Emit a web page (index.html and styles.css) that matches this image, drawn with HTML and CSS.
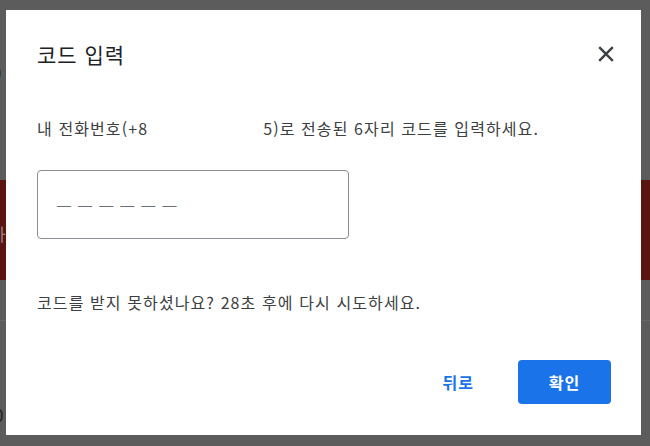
FILE: index.html
```html
<!DOCTYPE html>
<html lang="ko">
<head>
<meta charset="utf-8">
<title>코드 입력</title>
<link rel="stylesheet" href="styles.css">
</head>
<body>
<div class="backdrop">
  <div class="bg-top"><span class="bg-paren">)</span></div>
  <div class="bg-band"><span class="bg-ha">하</span></div>
  <div class="bg-rule"></div>
  <div class="bg-bottom"><span class="bg-zero">0</span></div>
</div>
<div class="dialog" role="dialog">
  <div class="header">
    <h1 class="title">코드 입력</h1>
    <button class="close" aria-label="닫기">
      <svg width="16" height="16" viewBox="0 0 16 16"><path d="M1.2 1.2 L14.8 14.8 M14.8 1.2 L1.2 14.8" stroke="#3c4043" stroke-width="2.4" fill="none"/></svg>
    </button>
  </div>
  <p class="desc">내 전화번호(+8<span class="mask"></span>5)로 전송된 6자리 코드를 입력하세요.</p>
  <div class="field"><span class="placeholder">— — — — — —</span></div>
  <p class="resend">코드를 받지 못하셨나요? 28초 후에 다시 시도하세요.</p>
  <div class="actions">
    <button class="btn-text">뒤로</button>
    <button class="btn-primary">확인</button>
  </div>
</div>
</body>
</html>
```
FILE: styles.css
```css
html, body {
  margin: 0;
  padding: 0;
}
body {
  width: 650px;
  height: 446px;
  overflow: hidden;
  background: #5c5c5c;
  font-family: "Noto Sans CJK KR", "Noto Sans", sans-serif;
  position: relative;
}
.backdrop {
  display: flex;
  flex-direction: column;
}
.bg-top {
  height: 180px;
  position: relative;
}
.bg-paren {
  position: absolute;
  left: -4px;
  top: 62px;
  font-size: 18px;
  color: #1e1e1e;
  line-height: 20px;
}
.bg-band {
  height: 100px;
  background: #5a1510;
  position: relative;
}
.bg-ha {
  position: absolute;
  left: -10px;
  top: 44px;
  font-size: 17px;
  line-height: 20px;
  color: #9a8583;
}
.bg-rule {
  height: 40px;
  border-bottom: 1px solid #686868;
}
.bg-bottom {
  height: 125px;
  position: relative;
}
.bg-zero {
  position: absolute;
  left: -6px;
  top: 84px;
  font-size: 17px;
  line-height: 20px;
  color: #1e1e1e;
}
.dialog {
  position: absolute;
  left: 6px;
  top: 10px;
  width: 635px;
  height: 425px;
  background: #fff;
  box-sizing: border-box;
  padding: 30px 30px 0 31px;
  display: flex;
  flex-direction: column;
}
.header {
  display: flex;
  align-items: center;
  justify-content: space-between;
  height: 28px;
}
.title {
  margin: 0;
  font-size: 21px;
  font-weight: 400;
  letter-spacing: 1px;
  line-height: 28px;
  color: #202124;
}
.close {
  border: 0;
  background: none;
  padding: 0;
  margin-right: -3px;
  width: 16px;
  height: 16px;
  display: flex;
}
.desc {
  margin: 48px 0 0;
  font-size: 16px;
  letter-spacing: 1.1px;
  line-height: 24px;
  color: #3c4043;
  white-space: nowrap;
}
.mask {
  display: inline-block;
  width: 115px;
  height: 1px;
}
.field {
  margin-top: 30px;
  width: 312px;
  height: 69px;
  box-sizing: border-box;
  border: 1px solid #8a8d91;
  border-radius: 4px;
  display: flex;
  align-items: center;
  padding-left: 19px;
}
.placeholder {
  font-family: "Liberation Sans", sans-serif;
  font-size: 14px;
  letter-spacing: 1.6px;
  color: #6b6e72;
  line-height: 20px;
}
.resend {
  margin: 51px 0 0;
  font-size: 16px;
  letter-spacing: 1.1px;
  line-height: 24px;
  color: #3c4043;
}
.actions {
  margin-top: 46px;
  display: flex;
  justify-content: flex-end;
  align-items: center;
}
.btn-text {
  border: 0;
  background: none;
  font-family: inherit;
  font-size: 16px;
  font-weight: 700;
  letter-spacing: 1px;
  color: #1a73e8;
  padding: 0 22px;
  height: 44px;
  margin-right: 22px;
}
.btn-primary {
  border: 0;
  background: #1a73e8;
  color: #fff;
  font-family: inherit;
  font-size: 16px;
  font-weight: 700;
  letter-spacing: 1px;
  width: 93px;
  height: 44px;
  border-radius: 4px;
}
```
